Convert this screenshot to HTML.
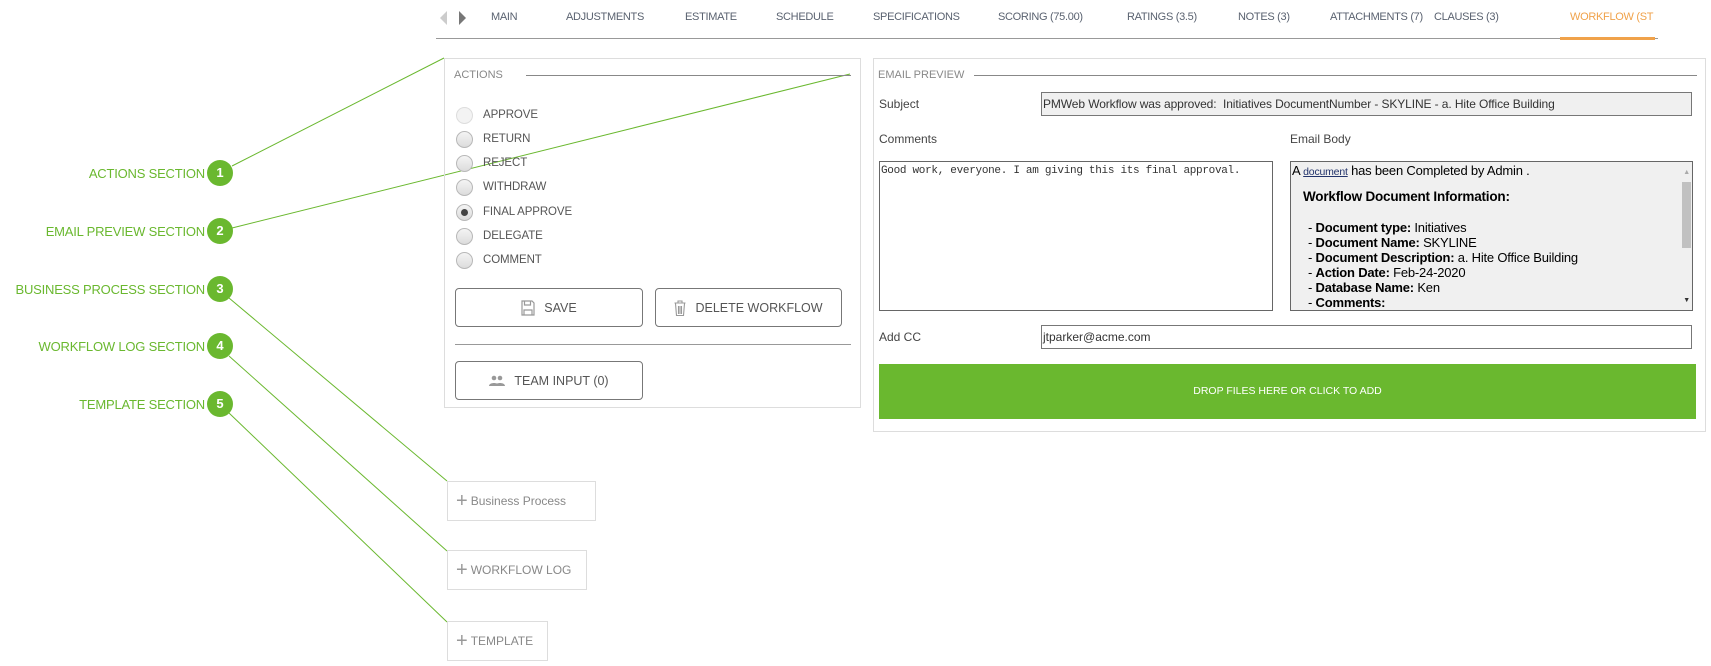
<!DOCTYPE html>
<html><head><meta charset="utf-8"><style>
*{box-sizing:border-box;margin:0;padding:0}
body{width:1711px;height:666px;background:#fff;font-family:"Liberation Sans",sans-serif;position:relative;overflow:hidden;color:#555}
.a{position:absolute;white-space:nowrap}
.tab{position:absolute;top:11px;font-size:11px;letter-spacing:-0.3px;color:#5a6270}
.lbl{position:absolute;font-size:13px;color:#6ab82f;text-align:right;width:205px;left:0;letter-spacing:-0.2px}
.badge{position:absolute;width:26px;height:26px;border-radius:50%;background:#6ab82f;color:#fff;font-size:13px;font-weight:bold;text-align:center;line-height:26px}
.radio{position:absolute;left:456px;width:17px;height:17px;border-radius:50%;border:1px solid #b8b8b8;background:linear-gradient(#f4f4f4,#dcdcdc)}
.rl{position:absolute;left:483px;font-size:11.5px;color:#555;letter-spacing:-0.1px}
.btn{position:absolute;border:1px solid #777;border-radius:4px;font-size:12.5px;color:#555;display:flex;align-items:center;justify-content:center;gap:9px}
.sec{position:absolute;border:1px solid #ddd;font-size:12px;color:#888;display:flex;align-items:center;padding-left:8px}
.sec b{font-size:20px;font-weight:normal;color:#999;margin-right:3px}
.fl{font-size:12px;color:#444;position:absolute}
</style></head><body>
<svg class="a" style="left:0;top:0" width="1711" height="666">
<polygon points="447,11 447,25 440,18" fill="#ccc"/>
<polygon points="459,11 459,25 466,18" fill="#777"/>
<line x1="436" y1="38.5" x2="1658" y2="38.5" stroke="#999" stroke-width="1"/>
<rect x="1560" y="37" width="95" height="3" fill="#f0a24a"/>
<g stroke="#6ab82f" stroke-width="1" fill="none">
<line x1="232" y1="166" x2="444" y2="58"/>
<line x1="232" y1="228" x2="850" y2="74"/>
<line x1="229" y1="298" x2="447" y2="481"/>
<line x1="229" y1="356" x2="447" y2="551"/>
<line x1="229" y1="413" x2="447" y2="622"/>
</g>
</svg>
<div class="a" style="left:0;top:0;width:1711px;height:40px">
<span class="tab" style="left:491px">MAIN</span>
<span class="tab" style="left:566px">ADJUSTMENTS</span>
<span class="tab" style="left:685px">ESTIMATE</span>
<span class="tab" style="left:776px">SCHEDULE</span>
<span class="tab" style="left:873px">SPECIFICATIONS</span>
<span class="tab" style="left:998px">SCORING (75.00)</span>
<span class="tab" style="left:1127px">RATINGS (3.5)</span>
<span class="tab" style="left:1238px">NOTES (3)</span>
<span class="tab" style="left:1330px">ATTACHMENTS (7)</span>
<span class="tab" style="left:1434px">CLAUSES (3)</span>
<span class="tab" style="left:1570px;color:#f0a24a">WORKFLOW (ST</span>
</div>

<div class="lbl" style="top:166px">ACTIONS SECTION</div>
<div class="lbl" style="top:224px">EMAIL PREVIEW SECTION</div>
<div class="lbl" style="top:282px">BUSINESS PROCESS SECTION</div>
<div class="lbl" style="top:339px">WORKFLOW LOG SECTION</div>
<div class="lbl" style="top:397px">TEMPLATE SECTION</div>
<div class="badge" style="left:207px;top:160px">1</div>
<div class="badge" style="left:207px;top:218px">2</div>
<div class="badge" style="left:207px;top:276px">3</div>
<div class="badge" style="left:207px;top:333px">4</div>
<div class="badge" style="left:207px;top:391px">5</div>

<!-- actions -->
<div class="a" style="left:444px;top:58px;width:417px;height:350px;border:1px solid #ddd"></div>
<div class="a" style="left:454px;top:69px;font-size:11px;color:#888">ACTIONS</div>
<div class="a" style="left:526px;top:75px;width:325px;height:1px;background:#888"></div>
<div class="radio" style="top:107px;background:#f3f3f3;border-color:#ddd"></div><div class="rl" style="top:109px">APPROVE</div>
<div class="radio" style="top:131px"></div><div class="rl" style="top:133px">RETURN</div>
<div class="radio" style="top:155px"></div><div class="rl" style="top:157px">REJECT</div>
<div class="radio" style="top:179px"></div><div class="rl" style="top:181px">WITHDRAW</div>
<div class="radio" style="top:204px"><div style="width:7px;height:7px;border-radius:50%;background:#444;margin:4px"></div></div><div class="rl" style="top:206px">FINAL APPROVE</div>
<div class="radio" style="top:228px"></div><div class="rl" style="top:230px">DELEGATE</div>
<div class="radio" style="top:252px"></div><div class="rl" style="top:254px">COMMENT</div>
<div class="btn" style="left:455px;top:288px;width:188px;height:39px"><svg width="14" height="16" viewBox="0 0 14 16"><path d="M1 1h10l2 2v12H1z M3.5 1v4h6V1 M3 15V10h8v5" fill="none" stroke="#999" stroke-width="1.2"/></svg>SAVE</div>
<div class="btn" style="left:655px;top:288px;width:187px;height:39px"><svg width="12" height="16" viewBox="0 0 12 16"><path d="M0.5 3h11 M4 3V1h4v2 M1.5 3.5l1 12h7l1-12 M4.5 6v8 M6 6v8 M7.5 6v8" fill="none" stroke="#999" stroke-width="1.1"/></svg>DELETE WORKFLOW</div>
<div class="a" style="left:455px;top:344px;width:396px;height:1px;background:#999"></div>
<div class="btn" style="left:455px;top:361px;width:188px;height:39px"><svg width="16" height="12" viewBox="0 0 16 12"><circle cx="5" cy="3" r="2.3" fill="#999"/><circle cx="11" cy="3" r="2.3" fill="#999"/><path d="M0 11c0-4 10-4 10 0z M6 11c0-4 10-4 10 0z" fill="#999"/></svg>TEAM INPUT (0)</div>

<!-- email -->
<div class="a" style="left:873px;top:58px;width:833px;height:374px;border:1px solid #ddd"></div>
<div class="a" style="left:878px;top:69px;font-size:11px;color:#888">EMAIL PREVIEW</div>
<div class="a" style="left:974px;top:75px;width:723px;height:1px;background:#888"></div>
<div class="fl" style="left:879px;top:97px">Subject</div>
<div class="a" style="left:1041px;top:92px;width:651px;height:24px;border:1px solid #777;background:#f0f0f0;font-size:12px;color:#333;padding:4px 1px;letter-spacing:-0.1px">PMWeb Workflow was approved:&nbsp; Initiatives DocumentNumber - SKYLINE - a. Hite Office Building</div>
<div class="fl" style="left:879px;top:132px">Comments</div>
<div class="fl" style="left:1290px;top:132px">Email Body</div>
<div class="a" style="left:879px;top:161px;width:394px;height:150px;border:1px solid #666;font-family:'Liberation Mono',monospace;font-size:11px;color:#333;padding:3px 1px;letter-spacing:-0.3px">Good work, everyone. I am giving this its final approval.</div>
<div class="a" style="left:1290px;top:161px;width:403px;height:150px;border:1px solid #666;background:#f0f0f0;font-size:13px;color:#000;padding:1px 1px;line-height:15px;overflow:hidden;letter-spacing:-0.2px">
A <u style="color:#22336b;font-size:10.5px">document</u> has been Completed by Admin .<br>
<div style="margin:9px 0 0 11px;font-weight:bold;font-size:13.5px">Workflow Document Information:</div>
<div style="margin:16px 0 0 16px">- <b>Document type:</b> Initiatives<br>- <b>Document Name:</b> SKYLINE<br>- <b>Document Description:</b> a. Hite Office Building<br>- <b>Action Date:</b> Feb-24-2020<br>- <b>Database Name:</b> Ken<br>- <b>Comments:</b></div>
<div style="position:absolute;right:1px;top:20px;width:9px;height:66px;background:#c1c1c1"></div>
<div style="position:absolute;right:2px;top:3px;font-size:7px;color:#aaa">▲</div>
<div style="position:absolute;right:2px;bottom:2px;font-size:7px;color:#333">▼</div>
</div>
<div class="fl" style="left:879px;top:330px">Add CC</div>
<div class="a" style="left:1041px;top:325px;width:651px;height:24px;border:1px solid #777;font-size:12px;color:#333;padding:4px 1px">jtparker@acme.com</div>
<div class="a" style="left:879px;top:364px;width:817px;height:55px;background:#6ab82f;color:#fff;font-size:10.5px;text-align:center;line-height:55px">DROP FILES HERE OR CLICK TO ADD</div>

<div class="sec" style="left:447px;top:481px;width:149px;height:40px"><b>+</b>Business Process</div>
<div class="sec" style="left:447px;top:550px;width:140px;height:40px"><b>+</b>WORKFLOW LOG</div>
<div class="sec" style="left:447px;top:621px;width:101px;height:40px"><b>+</b>TEMPLATE</div>
</body></html>
